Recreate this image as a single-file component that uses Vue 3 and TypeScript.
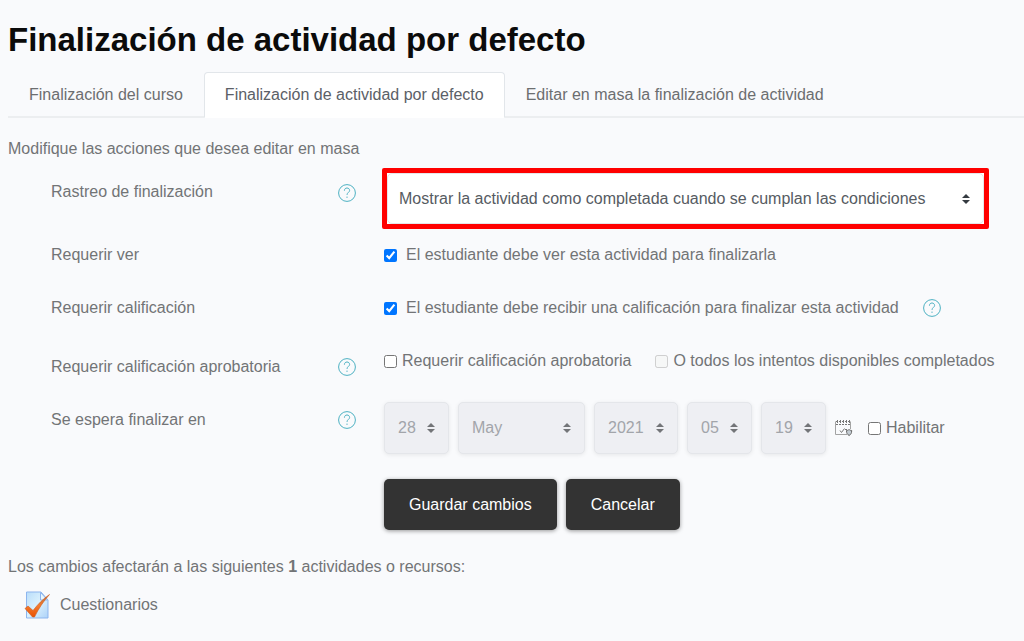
<script setup lang="ts">
import { ref } from 'vue'

interface DatePart {
  id: string
  label: string
  value: string
  size: string
}

const tabs = [
  'Finalización del curso',
  'Finalización de actividad por defecto',
  'Editar en masa la finalización de actividad',
]
const activeTab = ref(1)

const tracking = ref('Mostrar la actividad como completada cuando se cumplan las condiciones')
const requireView = ref(true)
const requireGrade = ref(true)
const requirePass = ref(false)
const exhausted = ref(false)
const enabled = ref(false)

const dateParts: DatePart[] = [
  { id: 'day', label: 'Día', value: '28', size: 'small' },
  { id: 'month', label: 'Mes', value: 'May', size: 'large' },
  { id: 'year', label: 'Año', value: '2021', size: 'medium' },
  { id: 'hour', label: 'Hora', value: '05', size: 'small' },
  { id: 'minute', label: 'Minuto', value: '19', size: 'small' },
]
</script>

<template>
  <main class="page">
    <h1>Finalización de actividad por defecto</h1>

    <nav class="tabs">
      <a
        v-for="(tab, i) in tabs"
        :key="tab"
        href="#"
        class="tab"
        :class="{ active: i === activeTab }"
        @click.prevent="activeTab = i"
      >{{ tab }}</a>
    </nav>

    <p class="intro">Modifique las acciones que desea editar en masa</p>

    <form @submit.prevent>
      <div class="row tracking">
        <label class="name" for="tracking">Rastreo de finalización</label>
        <button type="button" class="help" aria-label="Ayuda">
          <svg viewBox="0 0 18 18"><circle cx="9" cy="9" r="8.4" /><path d="M6.4 6.7C6.4 5 7.5 4 9 4s2.6 1 2.6 2.5C11.600 8.300 9 8.600 9 10.900M9 12.600v1.300" /></svg>
        </button>
        <div class="highlight">
          <select id="tracking" v-model="tracking" class="select">
            <option>{{ tracking }}</option>
          </select>
        </div>
      </div>

      <div class="row view">
        <span class="name">Requerir ver</span>
        <div class="field">
          <label class="check wide">
            <input v-model="requireView" type="checkbox">
            El estudiante debe ver esta actividad para finalizarla
          </label>
        </div>
      </div>

      <div class="row grade">
        <span class="name">Requerir calificación</span>
        <div class="field">
          <label class="check wide">
            <input v-model="requireGrade" type="checkbox">
            El estudiante debe recibir una calificación para finalizar esta actividad
          </label>
          <button type="button" class="help" aria-label="Ayuda">
            <svg viewBox="0 0 18 18"><circle cx="9" cy="9" r="8.4" /><path d="M6.4 6.7C6.4 5 7.5 4 9 4s2.6 1 2.6 2.5C11.600 8.300 9 8.600 9 10.900M9 12.600v1.300" /></svg>
          </button>
        </div>
      </div>

      <div class="row pass">
        <span class="name">Requerir calificación aprobatoria</span>
        <button type="button" class="help" aria-label="Ayuda">
          <svg viewBox="0 0 18 18"><circle cx="9" cy="9" r="8.4" /><path d="M6.4 6.7C6.4 5 7.5 4 9 4s2.6 1 2.6 2.5C11.600 8.300 9 8.600 9 10.900M9 12.600v1.300" /></svg>
        </button>
        <div class="field pair">
          <label class="check">
            <input v-model="requirePass" type="checkbox">
            Requerir calificación aprobatoria
          </label>
          <label class="check">
            <input v-model="exhausted" type="checkbox" disabled>
            O todos los intentos disponibles completados
          </label>
        </div>
      </div>

      <div class="row expected">
        <span class="name">Se espera finalizar en</span>
        <button type="button" class="help" aria-label="Ayuda">
          <svg viewBox="0 0 18 18"><circle cx="9" cy="9" r="8.4" /><path d="M6.4 6.7C6.4 5 7.5 4 9 4s2.6 1 2.6 2.5C11.600 8.300 9 8.600 9 10.900M9 12.600v1.300" /></svg>
        </button>
        <div class="field dates">
          <select
            v-for="part in dateParts"
            :key="part.id"
            class="select"
            :class="part.size"
            :aria-label="part.label"
            disabled
          >
            <option>{{ part.value }}</option>
          </select>
          <button type="button" class="calendar" aria-label="Calendario">
            <svg viewBox="0 0 18 18" fill="none" stroke="#777">
              <path d="M1 2.500H16" stroke-dasharray="2 1" />
              <path d="M1 5.500H16" stroke-dasharray="2 1" />
              <path d="M2.500 1v3M5.500 1v3M8.500 1v3M11.500 1v3M14.500 1v3" />
              <path d="M.5 2.500V15.500H12M15.500 2.500V10" stroke="#a3a3a3" />
              <path d="M5 11.500l1.500 2L9.500 9.500M10 10.500h2" />
              <path d="M11.500 11.500c2 0 2-1 2.500-1s1 1 2.700 1c0 3-1 4-2.600 5-1.600-1-2.600-2-2.600-5z" fill="#c3cbd2" stroke="#666" />
            </svg>
          </button>
          <label class="check enable">
            <input v-model="enabled" type="checkbox">
            Habilitar
          </label>
        </div>
      </div>

      <div class="row actions">
        <div class="field buttons">
          <button type="submit" class="btn save">Guardar cambios</button>
          <button type="button" class="btn">Cancelar</button>
        </div>
      </div>
    </form>

    <p class="summary">Los cambios afectarán a las siguientes <strong>1</strong> actividades o recursos:</p>

    <div class="activity">
      <svg viewBox="0 0 26 28" aria-hidden="true">
        <defs>
          <linearGradient id="sheet" x1="0" y1="0" x2="1" y2="1">
            <stop offset="0" stop-color="#b9ddfa" />
            <stop offset=".5" stop-color="#dbf1fd" />
            <stop offset="1" stop-color="#add2f8" />
          </linearGradient>
          <linearGradient id="tick" x1="0" y1="0" x2="0" y2="1">
            <stop offset="0" stop-color="#b96b3b" />
            <stop offset=".5" stop-color="#f47a2c" />
            <stop offset="1" stop-color="#e95105" />
          </linearGradient>
        </defs>
        <path d="M2.500 1H17l7 8v18H2.500z" fill="url(#sheet)" stroke="#8db5ee" />
        <path d="M16.500 1.500v7.500h7z" fill="#e9f7fe" stroke="#8db5ee" />
        <path d="M1 17.500l3-2.500 5 4.500C14 13 19 8 25.500 3.500 19 11 15 17 10.500 26H8.500z" fill="url(#tick)" stroke="#cc5a1e" stroke-width=".6" />
      </svg>
      <span>Cuestionarios</span>
    </div>
  </main>
</template>

<style>
body {
  margin: 0;
  background: #f9fafc;
}
</style>

<style scoped>
.page {
  padding: 16px 0 16px 8px;
  color: #727476;
  font: 16px/24px "Liberation Sans", Arial, sans-serif;
}
* {
  box-sizing: border-box;
}
h1 {
  margin: 0;
  color: #0b0b0b;
  font-size: 33px;
  line-height: 48px;
}
p {
  margin: 0;
}
.tabs {
  display: flex;
  margin-top: 8px;
  border-bottom: 2px solid #eceef0;
}
.tab {
  margin-bottom: -2px;
  padding: 10px 20px;
  border: 1px solid transparent;
  border-radius: 4px 4px 0 0;
  color: #6c6e70;
  text-decoration: none;
}
.tab.active {
  border-color: #e2e6ea;
  border-bottom-color: #fff;
  background: #fff;
  color: #5b6067;
}
.intro {
  margin-top: 19px;
}
form {
  padding-left: 43px;
}
.row {
  display: grid;
  grid-template-columns: 287px 46px minmax(0, 1fr);
  align-items: start;
}
.name {
  grid-column: 1;
}
.field,
.highlight {
  grid-column: 3;
}
.field {
  display: flex;
  align-items: center;
}
.tracking {
  margin-top: 7px;
}
.tracking > .name {
  margin-top: 12px;
}
.tracking > .help {
  margin-top: 16px;
}
.view {
  margin-top: 14px;
}
.grade {
  margin-top: 29px;
}
.grade .field {
  gap: 24px;
}
.pass {
  margin-top: 29px;
}
.pass > .name {
  margin-top: 6px;
}
.pass > .help {
  margin-top: 9px;
}
.expected {
  margin-top: 23px;
}
.expected > .name {
  margin-top: 6px;
}
.expected > .help {
  margin-top: 9px;
}
.actions {
  margin-top: 25px;
}
.help,
.calendar {
  flex: none;
  width: 18px;
  height: 18px;
  padding: 0;
  border: 0;
  background: none;
}
.help svg,
.calendar svg {
  display: block;
  width: 18px;
  height: 18px;
}
.help svg {
  fill: none;
  stroke: #4db1c2;
}
.highlight {
  max-width: 607px;
  margin-left: -2px;
  border: 5px solid #f00;
  border-radius: 2px;
  background: #fff;
}
.select {
  display: block;
  appearance: none;
  height: 52px;
  padding: 0 28px 0 13px;
  border: 1px solid #e4e6ea;
  border-radius: 5px;
  background: #fff url("data:image/svg+xml,%3Csvg xmlns='http://www.w3.org/2000/svg' viewBox='0 0 4 5'%3E%3Cpath fill='%23343a40' d='M2 0L0 2h4zm0 5L0 3h4z'/%3E%3C/svg%3E") no-repeat right 13px center / 8px 10px;
  color: #565b62;
  font: inherit;
}
.highlight .select {
  width: 100%;
  height: 51px;
  padding-left: 11px;
}
.select:disabled {
  background-color: #eeeff3;
  background-image: url("data:image/svg+xml,%3Csvg xmlns='http://www.w3.org/2000/svg' viewBox='0 0 4 5'%3E%3Cpath fill='%23737578' d='M2 0L0 2h4zm0 5L0 3h4z'/%3E%3C/svg%3E");
  box-shadow: 0 1px 4px rgba(0, 0, 0, .08);
  color: #a2a5aa;
  opacity: 1;
}
.small {
  width: 65px;
}
.medium {
  width: 84px;
}
.large {
  width: 127px;
}
.check {
  display: flex;
  align-items: center;
  gap: 5px;
}
.check.wide {
  gap: 9px;
}
.check input {
  flex: none;
  width: 13px;
  height: 13px;
  margin: 0;
}
.pair {
  gap: 24px;
}
.dates,
.buttons {
  gap: 9px;
}
.enable {
  margin-left: 6px;
}
.btn {
  height: 51px;
  padding: 0 25px;
  border: 0;
  border-radius: 5px;
  background: #333;
  box-shadow: 0 1px 4px rgba(0, 0, 0, .4);
  color: #fff;
  font: inherit;
}
.summary {
  margin-top: 25px;
}
.activity {
  display: flex;
  align-items: center;
  gap: 10px;
  margin-top: 12px;
  padding-left: 16px;
}
.activity svg {
  width: 26px;
  height: 28px;
}
</style>
